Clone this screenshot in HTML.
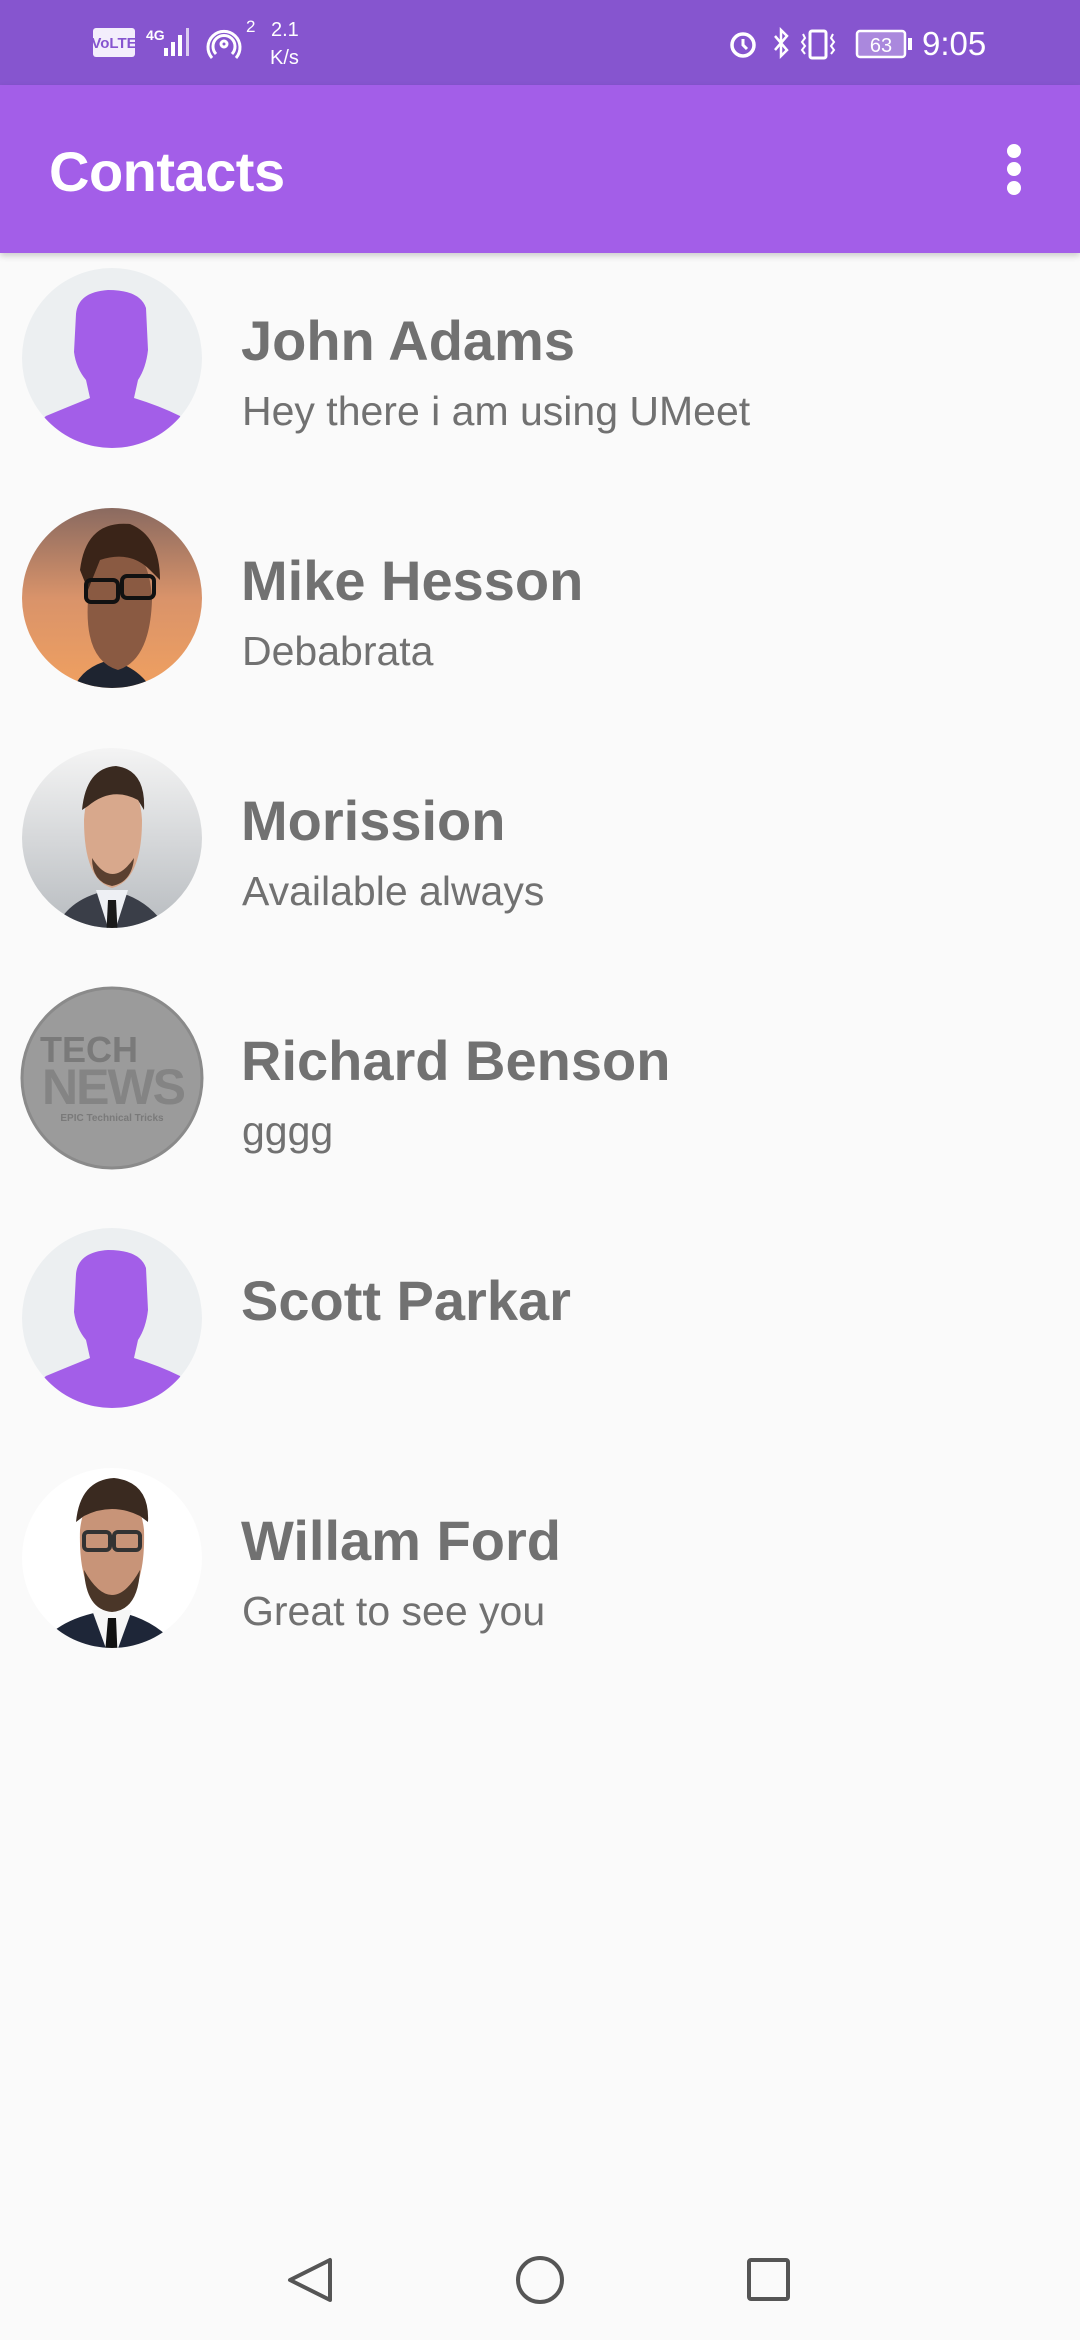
<!DOCTYPE html>
<html><head><meta charset="utf-8"><style>
*{margin:0;padding:0;box-sizing:border-box}
body{width:1080px;height:2340px;background:#fafafa;font-family:"Liberation Sans",sans-serif;position:relative;overflow:hidden}
.sb{position:absolute;left:0;top:0;width:1080px;height:85px;background:#8655cf;color:#fff}
.ab{position:absolute;left:0;top:85px;width:1080px;height:168px;background:#a35ee8;box-shadow:0 3px 6px rgba(0,0,0,.18)}
.title{position:absolute;left:49px;top:59px;font-size:56px;font-weight:bold;color:#fff;line-height:1;letter-spacing:-0.5px}
.dot{position:absolute;left:1007px;width:14px;height:14px;border-radius:50%;background:#fff}
.name{position:absolute;left:241px;font-size:56px;font-weight:bold;color:#717171;line-height:1}
.sub{position:absolute;left:242px;font-size:41px;color:#717171;line-height:1}
</style></head><body>
<div class="sb">
<svg width="1080" height="85" style="position:absolute;left:0;top:0">
<rect x="93" y="28" width="42" height="29" rx="3" fill="#f3eefc"/>
<text x="114" y="48" font-size="15" font-weight="bold" fill="#8655cf" text-anchor="middle" font-family="Liberation Sans">VoLTE</text>
<text x="146" y="40" font-size="14" font-weight="bold" fill="#fff" font-family="Liberation Sans">4G</text>
<rect x="164" y="48" width="4" height="8" fill="#fff"/><rect x="171" y="42" width="4" height="14" fill="#fff"/><rect x="178" y="35" width="4" height="21" fill="#fff"/><rect x="186" y="28" width="3" height="28" fill="#fff" opacity=".7"/>
<circle cx="224" cy="44" r="3" fill="none" stroke="#fff" stroke-width="3"/>
<path d="M216 54 A11 11 0 1 1 232 54" fill="none" stroke="#fff" stroke-width="3"/>
<path d="M212 58 A16 16 0 1 1 236 58" fill="none" stroke="#fff" stroke-width="3"/>
<text x="246" y="32" font-size="17" fill="#fff" font-family="Liberation Sans">2</text>
<text x="271" y="36" font-size="20" fill="#fff" font-family="Liberation Sans">2.1</text>
<text x="270" y="64" font-size="20" fill="#fff" font-family="Liberation Sans">K/s</text>
<circle cx="743" cy="45" r="11" fill="none" stroke="#fff" stroke-width="3.5"/>
<path d="M743 39 V45 L747 49" stroke="#fff" stroke-width="3" fill="none"/>
<path d="M775 36 L787 50 L781 56 V30 L787 36 L775 50" stroke="#fff" stroke-width="2.5" fill="none"/>
<rect x="810" y="31" width="16" height="27" rx="2" fill="none" stroke="#fff" stroke-width="3"/>
<path d="M803 34 L805 38 L802 42 L805 46 L802 50 L805 54 M833 34 L831 38 L834 42 L831 46 L834 50 L831 54" stroke="#fff" stroke-width="2" fill="none"/>
<rect x="857" y="31" width="48" height="26" rx="3" fill="rgba(255,255,255,.3)" stroke="#fff" stroke-width="2.5"/>
<rect x="908" y="38" width="4" height="12" fill="#fff"/>
<text x="881" y="52" font-size="20" fill="#fff" text-anchor="middle" font-family="Liberation Sans">63</text>
<text x="922" y="55" font-size="33" fill="#fff" font-family="Liberation Sans">9:05</text>
</svg>
</div>
<div class="ab">
<div class="title">Contacts</div>
<div class="dot" style="top:59px"></div><div class="dot" style="top:77px"></div><div class="dot" style="top:96px"></div>
</div>

<svg width="220" height="1420" style="position:absolute;left:0;top:252px">
<defs>
<clipPath id="c"><circle cx="112" cy="98" r="90"/></clipPath>
<linearGradient id="sun" x1="0" y1="0" x2="0" y2="1"><stop offset="0" stop-color="#8a6a60"/><stop offset=".5" stop-color="#d9936a"/><stop offset="1" stop-color="#f0a060"/></linearGradient>
<linearGradient id="sky" x1="0" y1="0" x2="0" y2="1"><stop offset="0" stop-color="#f4f4f4"/><stop offset="1" stop-color="#b8bcc0"/></linearGradient>
<g id="sil"><circle cx="112" cy="98" r="90" fill="#eceff1"/>
<g clip-path="url(#c)"><path d="M76 54 Q78 32 108 30 Q140 30 146 48 L148 90 Q146 108 138 120 L134 138 Q160 146 180 156 Q186 166 180 186 Q150 200 112 200 Q70 200 40 186 Q34 166 46 156 Q70 146 90 138 L86 120 Q76 108 74 92 Z" fill="#a35ee8"/></g></g>
</defs>
<use href="#sil" y="8"/>
<g transform="translate(0,248)">
<circle cx="112" cy="98" r="90" fill="url(#sun)"/>
<g clip-path="url(#c)">
<path d="M70 210 Q70 170 110 160 Q150 170 160 210 Z" fill="#1e2430"/>
<path d="M88 100 Q84 160 118 170 Q150 160 152 100 Q150 50 118 40 Q84 50 88 100Z" fill="#8a5a42"/>
<path d="M80 70 Q86 20 130 24 Q160 36 160 80 L150 70 Q130 50 100 60 L88 90 Z" fill="#3a2418"/>
<rect x="86" y="80" width="32" height="22" rx="5" fill="none" stroke="#111" stroke-width="4"/>
<rect x="122" y="76" width="32" height="22" rx="5" fill="none" stroke="#111" stroke-width="4"/>
</g></g>
<g transform="translate(0,488)">
<circle cx="112" cy="98" r="90" fill="url(#sky)"/>
<g clip-path="url(#c)">
<path d="M50 210 Q56 160 110 150 Q160 160 176 210 Z" fill="#3a3e48"/>
<path d="M96 150 L112 200 L128 150 Z" fill="#eef0f4"/>
<path d="M108 160 L116 160 L118 200 L106 200 Z" fill="#1a1a1a"/>
<path d="M84 80 Q84 140 112 148 Q142 140 142 80 Q140 40 112 36 Q86 40 84 80Z" fill="#d8a88c"/>
<path d="M82 70 Q86 28 116 26 Q146 30 144 70 L138 60 Q112 46 88 66 Z" fill="#3a2a20"/>
<path d="M92 118 Q112 150 134 118 Q132 142 112 146 Q92 142 92 118Z" fill="#5a4030"/>
</g></g>
<g transform="translate(0,728)">
<circle cx="112" cy="98" r="90" fill="#9b9b9b" stroke="#8a8a8a" stroke-width="3"/>
<text x="40" y="82" font-size="36" font-weight="bold" fill="#7a7a7a" font-family="Liberation Sans">TECH</text>
<text x="42" y="124" font-size="50" font-weight="bold" fill="#848484" font-family="Liberation Sans" textLength="144">NEWS</text>
<text x="112" y="141" font-size="10" font-weight="bold" fill="#7a7a7a" text-anchor="middle" font-family="Liberation Sans">EPIC Technical Tricks</text>
</g>
<use href="#sil" y="968"/>
<g transform="translate(0,1208)">
<circle cx="112" cy="98" r="90" fill="#fff"/>
<g clip-path="url(#c)">
<path d="M30 210 Q40 160 110 150 Q170 160 190 210 Z" fill="#1e2638"/>
<path d="M92 150 L112 205 L132 150 Z" fill="#f6f6f6"/>
<path d="M108 158 L116 158 L118 205 L104 205 Z" fill="#111"/>
<path d="M80 70 Q78 140 112 148 Q146 140 144 70 Q140 32 112 30 Q84 32 80 70Z" fill="#c89478"/>
<path d="M76 62 Q80 20 114 18 Q150 22 148 62 L140 56 Q112 42 84 56 Z" fill="#3a2a20"/>
<path d="M84 110 Q112 160 140 110 Q138 150 112 152 Q86 150 84 110Z" fill="#4a3628"/>
<rect x="84" y="72" width="26" height="18" rx="4" fill="none" stroke="#333" stroke-width="4"/>
<rect x="114" y="72" width="26" height="18" rx="4" fill="none" stroke="#333" stroke-width="4"/>
</g></g>
</svg>

<div class="name" style="top:313px">John Adams</div>
<div class="sub" style="top:391px">Hey there i am using UMeet</div>
<div class="name" style="top:553px">Mike Hesson</div>
<div class="sub" style="top:631px">Debabrata</div>
<div class="name" style="top:793px">Morission</div>
<div class="sub" style="top:871px">Available always</div>
<div class="name" style="top:1033px">Richard Benson</div>
<div class="sub" style="top:1111px">gggg</div>
<div class="name" style="top:1273px">Scott Parkar</div>
<div class="name" style="top:1513px">Willam Ford</div>
<div class="sub" style="top:1591px">Great to see you</div>

<svg width="1080" height="120" style="position:absolute;left:0;top:2220px">
<path d="M330 40 L330 80 L290 60 Z" fill="none" stroke="#555" stroke-width="4" stroke-linejoin="round"/>
<circle cx="540" cy="60" r="22" fill="none" stroke="#555" stroke-width="4"/>
<rect x="749" y="40" width="39" height="39" rx="2" fill="none" stroke="#555" stroke-width="4"/>
</svg>
</body></html>
